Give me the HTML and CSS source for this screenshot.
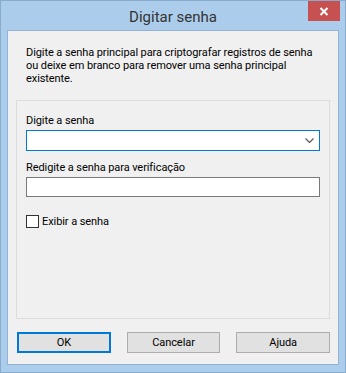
FILE: index.html
```html
<!DOCTYPE html>
<html lang="pt">
<head>
    <meta charset="UTF-8">
    <title>Digitar senha</title>
    <link rel="stylesheet" href="styles.css">
</head>
<body>
<div class="window">
    <div class="titlebar">
        <span></span>
        <span class="title">Digitar senha</span>
        <button class="close" type="button" aria-label="Fechar">
            <svg width="10" height="9" viewBox="0 0 10 9">
                <path d="M1.5 1 L8.5 8 M8.5 1 L1.5 8" stroke="#fff" stroke-width="2"/>
            </svg>
        </button>
    </div>
    <div class="client">
        <p class="intro">Digite a senha principal para criptografar registros de senha<br>ou deixe em branco para remover uma senha principal<br>existente.</p>
        <div class="group">
            <label class="field-label">Digite a senha</label>
            <div class="combo">
                <svg width="9" height="5" viewBox="0 0 9 5">
                    <path d="M0.5 0.5 L4.5 4.5 L8.5 0.5" stroke="#5a5a5a" stroke-width="1.2" fill="none"/>
                </svg>
            </div>
            <label class="field-label second">Redigite a senha para verificação</label>
            <div class="textbox"></div>
            <label class="check">
                <span class="box"></span>
                <span>Exibir a senha</span>
            </label>
        </div>
        <div class="buttons">
            <button class="btn default" type="button">OK</button>
            <button class="btn" type="button">Cancelar</button>
            <button class="btn" type="button">Ajuda</button>
        </div>
    </div>
</div>
</body>
</html>
```

FILE: styles.css
```css
*{
    margin: 0;
    padding: 0;
    box-sizing: border-box;
}
body{
    font-family: Roboto, "Liberation Sans", sans-serif;
    font-size: 11px;
    letter-spacing: -0.08px;
    color: #000;
    background: #fff;
}
.window{
    width: 346px;
    height: 373px;
    background: #abcdeb;
    border: 1px solid #8aaccc;
    padding: 0 6px 7px 6px;
    display: flex;
    flex-direction: column;
}
.titlebar{
    height: 29px;
    display: grid;
    grid-template-columns: 1fr auto 1fr;
    align-items: start;
}
.title{
    font-size: 15px;
    letter-spacing: 0;
    color: #333;
    line-height: 20px;
    padding-top: 6px;
}
.close{
    justify-self: end;
    width: 32px;
    height: 20px;
    margin-right: -1px;
    background: #c75050;
    border: none;
    display: flex;
    align-items: center;
    justify-content: center;
}
.client{
    flex: 1;
    background: #f0f0f0;
    border: 1px solid #92b3d3;
    padding: 0 8px;
    display: flex;
    flex-direction: column;
}
.intro{
    line-height: 13px;
    padding: 15px 10px 0 10px;
    height: 69px;
    white-space: nowrap;
}
.group{
    height: 219px;
    border: 1px solid #dcdcdc;
    padding: 12px 9px 0 9px;
    display: flex;
    flex-direction: column;
}
.field-label{
    line-height: 15px;
    margin-bottom: 2px;
}
.field-label.second{
    margin-top: 9px;
    margin-bottom: 2px;
}
.combo{
    height: 21px;
    background: #fff;
    border: 1px solid #0078d7;
    display: flex;
    align-items: center;
    justify-content: flex-end;
    padding-right: 5px;
}
.textbox{
    height: 20px;
    background: #fff;
    border: 1px solid #7a7a7a;
}
.check{
    display: flex;
    align-items: center;
    gap: 3px;
    margin-top: 18px;
    line-height: 13px;
}
.check .box{
    width: 13px;
    height: 13px;
    background: #fff;
    border: 1px solid #333;
}
.buttons{
    display: flex;
    gap: 16px;
    margin-top: 13px;
    padding-left: 1px;
}
.btn{
    width: 94px;
    height: 21px;
    background: #e1e1e1;
    border: 1px solid #adadad;
    font-family: inherit;
    font-size: 11px;
    letter-spacing: inherit;
    color: #000;
}
.btn.default{
    border: 2px solid #0078d7;
}
```
